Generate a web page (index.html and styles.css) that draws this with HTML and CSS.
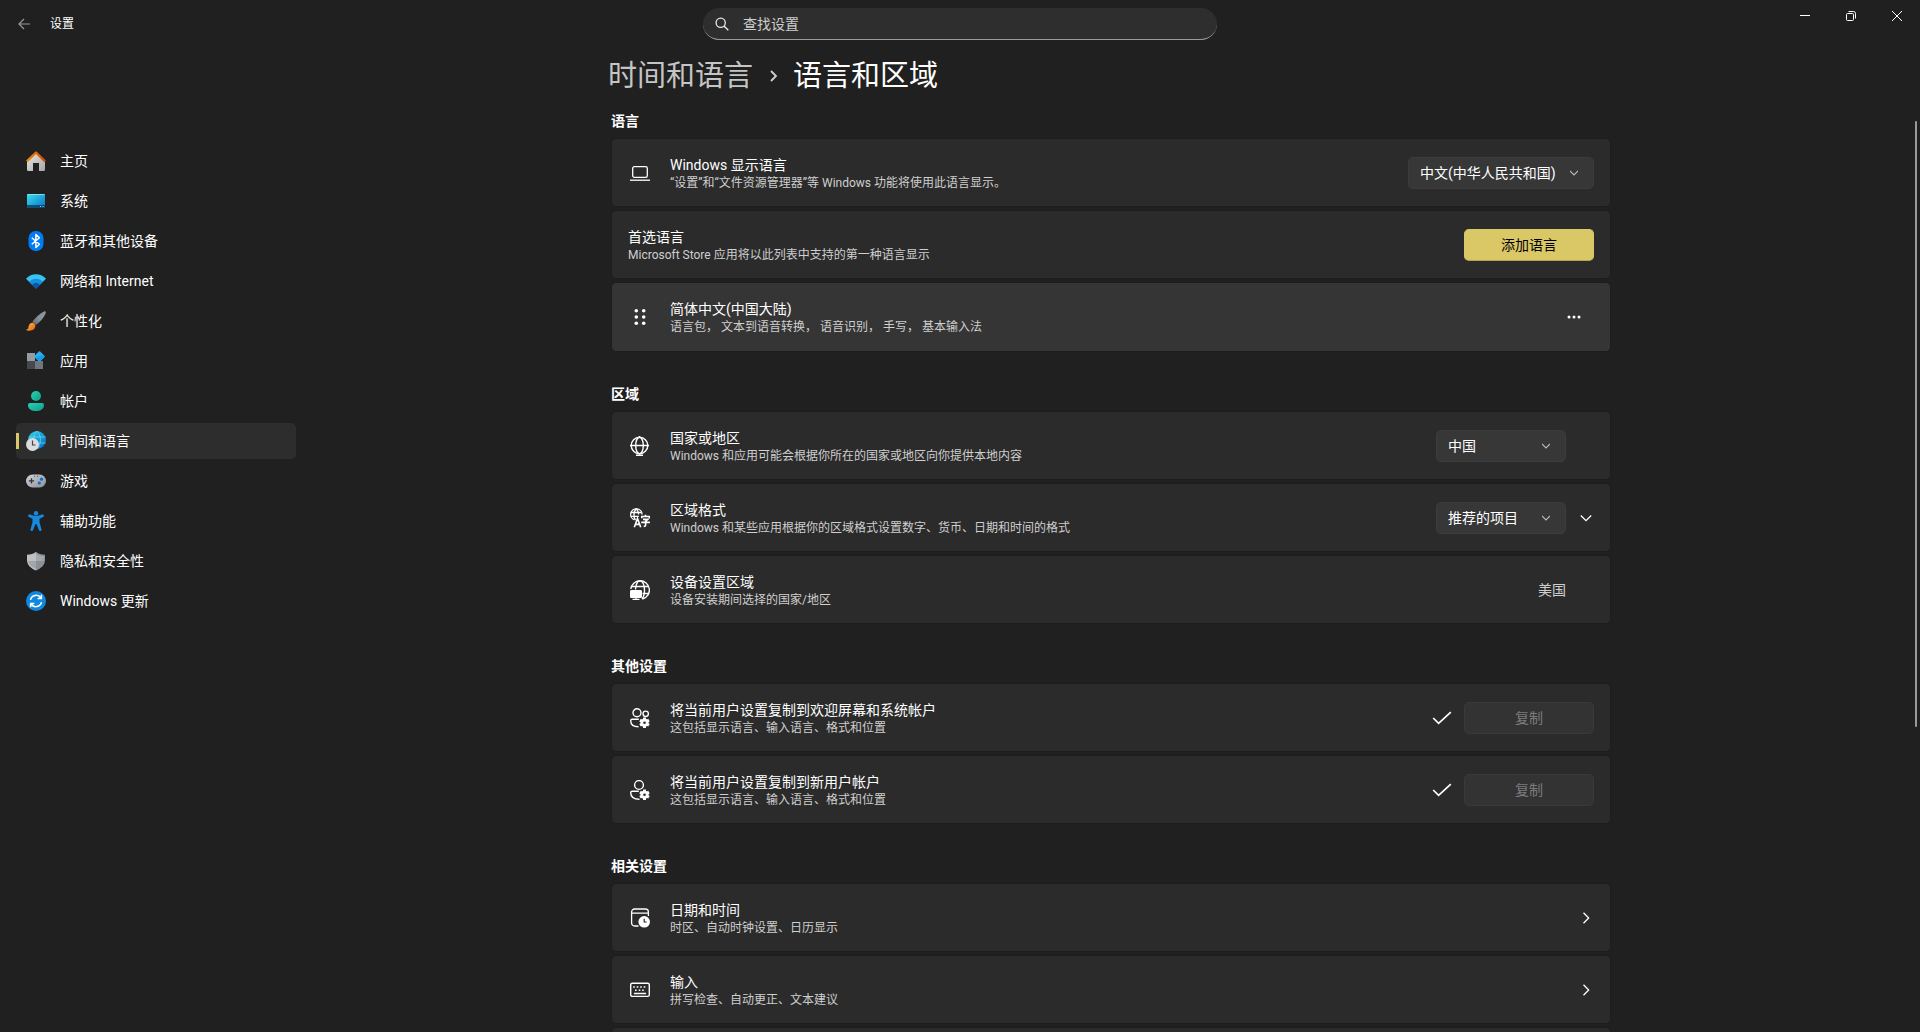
FILE: index.html
```html
<!DOCTYPE html>
<html lang="zh-CN">
<head>
<meta charset="utf-8">
<meta name="viewport" content="width=device-width, initial-scale=1">
<title>设置</title>
<link rel="stylesheet" href="styles.css">
</head>
<body>
<header class="titlebar">
  <div class="titlebar-start">
    <button class="back" type="button" aria-label="返回">
      <svg class="i12" viewBox="0 0 12 12"><path d="M6 1 1 6l5 5M1 6h11" fill="none" stroke="#9a9a9a" stroke-width="1.2"/></svg>
    </button>
    <span class="app-name">设置</span>
  </div>
  <label class="search">
    <svg class="i14" viewBox="0 0 14 14" aria-hidden="true"><circle cx="5.7" cy="5.7" r="4.6" fill="none" stroke="#e8e8e8" stroke-width="1.3"/><path d="m9 9 4.3 4.3" stroke="#e8e8e8" stroke-width="1.4"/></svg>
    <input type="text" placeholder="查找设置" aria-label="查找设置">
  </label>
  <div class="window-controls">
    <button type="button" aria-label="最小化"><svg class="i10" viewBox="0 0 10 10"><path d="M0 4.5h10" stroke="#fff"/></svg></button>
    <button type="button" aria-label="还原"><svg class="i10" viewBox="0 0 10 10"><rect x=".5" y="2.5" width="7" height="7" rx="1" fill="none" stroke="#fff"/><path d="M2.5.5H7.500A2 2 0 0 1 9.500 2.500V7.500" fill="none" stroke="#fff"/></svg></button>
    <button type="button" aria-label="关闭"><svg class="i10" viewBox="0 0 10 10"><path d="m0 0 10 10M10 0 0 10" stroke="#fff"/></svg></button>
  </div>
</header>

<div class="layout">
<nav class="nav">
  <a href="#home"><svg class="i20" viewBox="0 0 20 20"><defs><linearGradient id="hm" x1="0" y1="0" x2="1" y2="1"><stop stop-color="#e8e8e8"/><stop offset="1" stop-color="#a6a6a6"/></linearGradient><linearGradient id="rf"><stop stop-color="#f08a10"/><stop offset="1" stop-color="#d04a04"/></linearGradient></defs><path d="M1 9.500 10 1.500l9 8V18.500A1.500 1.500 0 0 1 17.500 20H13v-8H7v8H2.500A1.500 1.500 0 0 1 1 18.500z" fill="url(#hm)"/><path d="M.9 10.400 10 1.500l9.100 8.900" fill="none" stroke="url(#rf)" stroke-width="2.400" stroke-linejoin="round"/></svg>主页</a>
  <a href="#system"><svg class="i20" viewBox="0 0 20 20"><defs><linearGradient id="sy" x1="0" y1="0" x2="1" y2="1"><stop stop-color="#3ae0ea"/><stop offset="1" stop-color="#0a6fc8"/></linearGradient></defs><rect x="1" y="3" width="18" height="14" rx="1" fill="url(#sy)"/><path d="M1 14h18v2a1 1 0 0 1-1 1H2a1 1 0 0 1-1-1z" fill="#0a4263" opacity=".85"/><path d="M14 15.500h1M16.500 15.500h1" stroke="#9cd5ee"/><path d="M1.500 3.500h17" stroke="#8beef4" stroke-width=".8"/></svg>系统</a>
  <a href="#bluetooth"><svg class="i20" viewBox="0 0 20 20"><rect x="2.500" width="15" height="20" rx="7.200" fill="#007cf5"/><path d="m5.800 6.800 7.600 6.500-3.500 3.200V3.600l3.500 3.100-7.600 6.500" fill="none" stroke="#fff" stroke-width="1.500" stroke-linejoin="round"/></svg>蓝牙和其他设备</a>
  <a href="#network"><svg class="i20" viewBox="0 0 20 20"><path d="M10 17.500 0 7.700C5.500 1.900 14.500 1.900 20 7.700z" fill="#36c5f3"/><path d="M10 17.500 3.200 10.800c3.700-4 9.900-4 13.600 0z" fill="#168ee0"/><path d="m10 17.500-3.900-3.800c2.100-2.300 5.700-2.300 7.800 0z" fill="#0b55a3"/></svg>网络和 Internet</a>
  <a href="#personalization"><svg class="i20" viewBox="0 0 20 20"><defs><linearGradient id="br" x1="1" y1="0" x2="0" y2="1"><stop stop-color="#8b949d"/><stop offset=".5" stop-color="#8a929a"/><stop offset="1" stop-color="#5e656c"/></linearGradient><linearGradient id="bo" x1="0" y1="0" x2="1" y2="1"><stop stop-color="#ffc04a"/><stop offset="1" stop-color="#e85b0a"/></linearGradient></defs><path d="M18 .4c1-.7 2.200.1 1.800 1.400-1.200 4.200-5.300 8.800-9.800 12.200l-3.600-3.600C9.800 6.200 14 2.300 18 .4z" fill="url(#br)"/><path d="M0 18.700c2.200-.5 2.300-1.500 2.600-3.300.4-2.700 2.700-4.200 4.700-3.600l1.900 1.900c.7 2.400-.8 4.800-3.200 5.600-2 .7-4.700.6-6-.6z" fill="url(#bo)"/></svg>个性化</a>
  <a href="#apps"><svg class="i20" viewBox="0 0 20 20"><path d="M1 2h8v8H1z" fill="#959ba3"/><path d="M1 10h8v8H1z" fill="#45484d"/><path d="M9 10h8v8H9z" fill="#70767e"/><rect x="9.500" y="1.500" width="8" height="8" rx="1" transform="rotate(45 13.500 5.500)" fill="#28b0ef"/><path d="m9 7 4.500 3.500L18.300 6l-2-2z" fill="#128add" opacity=".55"/></svg>应用</a>
  <a href="#accounts"><svg class="i20" viewBox="0 0 20 20"><defs><linearGradient id="ac" x1="0" y1="0" x2="1" y2="1"><stop stop-color="#26d3b8"/><stop offset="1" stop-color="#129a86"/></linearGradient></defs><circle cx="10" cy="5" r="5" fill="url(#ac)"/><path d="M4 12h12a2 2 0 0 1 2 2c0 4-3.500 6-8 6s-8-2-8-6a2 2 0 0 1 2-2z" fill="url(#ac)"/></svg>帐户</a>
  <a href="#time-language" class="current" aria-current="page"><svg class="i20" viewBox="0 0 20 20"><defs><linearGradient id="gl" x1="0" y1="0" x2="1" y2="1"><stop stop-color="#2ed3e6"/><stop offset="1" stop-color="#0967c6"/></linearGradient></defs><circle cx="11" cy="9" r="9" fill="url(#gl)"/><path d="M3 6h16.500M3 12h16.500M11 0C6.500 4.500 6.500 13.500 11 18c4.500-4.500 4.500-13.500 0-18z" fill="none" stroke="#6adcf2" stroke-width=".9" opacity=".8"/><circle cx="6.500" cy="13.500" r="6.500" fill="#dcdcde"/><path d="M6.500 9.500v4.500h3" fill="none" stroke="#444" stroke-width="1.200"/></svg>时间和语言</a>
  <a href="#gaming"><svg class="i20" viewBox="0 0 20 20"><defs><linearGradient id="gm" x1="0" y1="0" x2="1" y2="1"><stop stop-color="#cfd3da"/><stop offset="1" stop-color="#8b9098"/></linearGradient></defs><rect y="3.500" width="20" height="13" rx="6.500" fill="url(#gm)"/><path d="M5.500 7.200v5.200M2.900 9.800h5.200" stroke="#333" stroke-width="1.300"/><circle cx="15.500" cy="8.200" r="1.600" fill="#0a6fca"/><circle cx="13.300" cy="12" r="1.600" fill="#0a6fca"/><path d="M8 5.300h1.200M11 5.300h1.200" stroke="#555"/></svg>游戏</a>
  <a href="#accessibility"><svg class="i20" viewBox="0 0 20 20"><circle cx="10" cy="2.200" r="2.200" fill="#148be0"/><path d="M2.200 4.200c.4-.9 1.200-1 2-.6 3.700 1.800 7.900 1.800 11.600 0 .8-.4 1.600-.3 2 .6s0 1.500-.7 1.900L13.500 7.700v3.500l2 7.300c.2.800-.2 1.300-.9 1.500-.8.200-1.400-.1-1.700-.9L10.500 13h-1l-2.400 6.100c-.3.800-.9 1.100-1.700.9-.7-.2-1.100-.7-.9-1.500l2-7.300V7.700L2.900 6.100c-.7-.4-1.100-1-.7-1.900z" fill="#148be0"/></svg>辅助功能</a>
  <a href="#privacy"><svg class="i20" viewBox="0 0 20 20"><path d="M10 .8C12.500 3 15.500 3.800 19 3.800V9c0 5-4 8.500-9 10.500z" fill="#8b9197"/><path d="M10 .8C7.500 3 4.500 3.800 1 3.800V9c0 5 4 8.500 9 10.500z" fill="#bcc1c6"/><path d="M10 2.500c2 1.600 4.500 2.500 7.700 2.600V10H10z" fill="#a4a9af"/><path d="M2.300 10H10v8c-4-1.700-7.200-4.200-7.700-8z" fill="#a1a6ab"/></svg>隐私和安全性</a>
  <a href="#update"><svg class="i20" viewBox="0 0 20 20"><circle cx="10" cy="10" r="10" fill="#0f88dd"/><path d="M4.500 8.800A5.700 5.700 0 0 1 14.900 7M15.500 11.200A5.700 5.700 0 0 1 5.100 13M15.400 3.800V7.500h-3.800M4.600 16.200v-3.700h3.800" fill="none" stroke="#fff" stroke-width="1.500"/></svg>Windows 更新</a>
</nav>

<main class="main">
<div class="content">
  <h1 class="crumbs"><a href="#time-language">时间和语言</a><svg class="i12" viewBox="0 0 12 12"><path d="m4 1 5 5-5 5" fill="none" stroke="#d0d0d0" stroke-width="1.800"/></svg><span>语言和区域</span></h1>

  <section>
    <h2>语言</h2>
    <div class="card">
      <svg class="i20 lead" viewBox="0 0 20 20"><rect x="2.700" y="3.700" width="14.600" height="10.600" rx="1.600" fill="none" stroke="#fff" stroke-width="1.300"/><path d="M0 17.200h20" stroke="#fff" stroke-width="1.300"/></svg>
      <label class="text" for="display-language"><b>Windows 显示语言</b><small>“设置”和“文件资源管理器”等 Windows 功能将使用此语言显示。</small></label>
      <div class="drop wide"><select id="display-language"><option>中文(中华人民共和国)</option></select><svg class="i8" viewBox="0 0 8 8"><path d="m0 2 4 4 4-4" fill="none" stroke="#bbb" stroke-width="1.100"/></svg></div>
    </div>
    <div class="card">
      <div class="text"><b>首选语言</b><small>Microsoft Store 应用将以此列表中支持的第一种语言显示</small></div>
      <button class="btn accent" type="button">添加语言</button>
    </div>
    <div class="card hover">
      <svg class="i20 lead" viewBox="0 0 20 20"><g fill="#fff"><circle cx="6.300" cy="3.700" r="1.800"/><circle cx="13.700" cy="3.700" r="1.800"/><circle cx="6.300" cy="10" r="1.800"/><circle cx="13.700" cy="10" r="1.800"/><circle cx="6.300" cy="16.300" r="1.800"/><circle cx="13.700" cy="16.300" r="1.800"/></g></svg>
      <div class="text"><b>简体中文(中国大陆)</b><small>语言包， 文本到语音转换， 语音识别， 手写， 基本输入法</small></div>
      <button class="more" type="button" aria-label="更多选项"><svg class="i14" viewBox="0 0 14 14"><g fill="#fff"><circle cx="2" cy="7" r="1.500"/><circle cx="7" cy="7" r="1.500"/><circle cx="12" cy="7" r="1.500"/></g></svg></button>
    </div>
  </section>

  <section>
    <h2>区域</h2>
    <div class="card">
      <svg class="i20 lead" viewBox="0 0 20 20"><g fill="none" stroke="#fff" stroke-width="1.400"><circle cx="9.500" cy="9.500" r="8.300"/><ellipse cx="9.500" cy="9.500" rx="3.800" ry="8.300"/><path d="M0 9.500h19M9.500 0v1M6 19.200h7"/></g></svg>
      <label class="text" for="country"><b>国家或地区</b><small>Windows 和应用可能会根据你所在的国家或地区向你提供本地内容</small></label>
      <div class="drop"><select id="country"><option>中国</option></select><svg class="i8" viewBox="0 0 8 8"><path d="m0 2 4 4 4-4" fill="none" stroke="#bbb" stroke-width="1.100"/></svg></div>
      <span class="trail"></span>
    </div>
    <div class="card">
      <svg class="i20 lead" viewBox="0 0 20 20"><g fill="none" stroke="#fff" stroke-width="1.300"><path d="M4.500 11.900A5.700 5.700 0 1 1 12.100 6.500"/><path d="M.6 4.500h11M.6 8.300h8.200M6.200.8C3.300 3.500 3.300 9.500 5.500 12M6.200.8c1.600 1.500 2.300 3.500 2.400 5.700"/><path d="m4.300 19.200 3.200-8.800 3.200 8.800M5.300 16.400h4.400" stroke-width="1.600"/><path d="M11.800 10.200V8.500h7.600v1.700M15.500 6.800v1.700M13 11.400h4.800l-2.200 2v4c0 .8-.5 1-1.900 1M11.200 14.400h8.700" stroke-width="1.600"/></g></svg>
      <label class="text" for="format"><b>区域格式</b><small>Windows 和某些应用根据你的区域格式设置数字、货币、日期和时间的格式</small></label>
      <div class="drop"><select id="format"><option>推荐的项目</option></select><svg class="i8" viewBox="0 0 8 8"><path d="m0 2 4 4 4-4" fill="none" stroke="#bbb" stroke-width="1.100"/></svg></div>
      <button class="trail" type="button" aria-label="展开"><svg class="i12" viewBox="0 0 12 12"><path d="m.8 3.500 5.200 5.200 5.200-5.200" fill="none" stroke="#fff" stroke-width="1.300"/></svg></button>
    </div>
    <div class="card">
      <svg class="i20 lead" viewBox="0 0 20 20"><g fill="none" stroke="#fff" stroke-width="1.400"><path d="M.8 9A9.300 9.300 0 1 1 12.500 19"/><path d="M2 6.500h16.500M12.500 13.500h6M5.500 9.500C5.800 5 7.500 1 10 .8c3 .2 4.700 5 4.500 9.700-.1 3.500-.8 6.500-2.500 8.500"/></g><rect y="10" width="12" height="8" rx="1.200" fill="#fff"/><path d="M2.500 19.400h7M6 17.500v1.500" stroke="#fff" stroke-width="1.200"/></svg>
      <div class="text"><b>设备设置区域</b><small>设备安装期间选择的国家/地区</small></div>
      <span class="value">美国</span>
      <span class="trail"></span>
    </div>
  </section>

  <section>
    <h2>其他设置</h2>
    <div class="card">
      <svg class="i20 lead" viewBox="0 0 20 20"><g fill="none" stroke="#fff" stroke-width="1.400"><circle cx="7" cy="4.800" r="4"/><circle cx="15.700" cy="5.800" r="2.700"/><path d="M8.800 11.200H2.200A1.500 1.500 0 0 0 .7 12.700c0 3.700 2.700 6 7.800 6"/></g><g stroke="#fff" stroke-width="3"><path d="M14.500 9.500v10.400M10 12.100l9 5.200M19 12.100l-9 5.200"/></g><circle cx="14.500" cy="14.700" r="4" fill="#fff"/><circle cx="14.500" cy="14.700" r="1.300" fill="#2b2b2b"/></svg>
      <div class="text"><b>将当前用户设置复制到欢迎屏幕和系统帐户</b><small>这包括显示语言、输入语言、格式和位置</small></div>
      <svg class="i20 check" viewBox="0 0 20 20"><path d="m1.200 10 5.400 5.400L18.800 4.200" fill="none" stroke="#fff" stroke-width="1.700"/></svg>
      <button class="btn" type="button" disabled>复制</button>
    </div>
    <div class="card">
      <svg class="i20 lead" viewBox="0 0 20 20"><g fill="none" stroke="#fff" stroke-width="1.400"><circle cx="9" cy="5" r="4.400"/><path d="M8.800 11.200H2.200A1.500 1.500 0 0 0 .7 12.700c0 4 3.300 6.500 8.800 6.500"/></g><g stroke="#fff" stroke-width="3"><path d="M14.500 9.500v10.400M10 12.100l9 5.200M19 12.100l-9 5.200"/></g><circle cx="14.500" cy="14.700" r="4" fill="#fff"/><circle cx="14.500" cy="14.700" r="1.300" fill="#2b2b2b"/></svg>
      <div class="text"><b>将当前用户设置复制到新用户帐户</b><small>这包括显示语言、输入语言、格式和位置</small></div>
      <svg class="i20 check" viewBox="0 0 20 20"><path d="m1.200 10 5.400 5.400L18.800 4.200" fill="none" stroke="#fff" stroke-width="1.700"/></svg>
      <button class="btn" type="button" disabled>复制</button>
    </div>
  </section>

  <section>
    <h2>相关设置</h2>
    <a class="card" href="#date-time">
      <svg class="i20 lead" viewBox="0 0 20 20"><g fill="none" stroke="#fff" stroke-width="1.300"><path d="M8.500 18H4.600A3 3 0 0 1 1.600 15V4A3 3 0 0 1 4.600 1h10.800a3 3 0 0 1 3 3v4M1.600 5.200h16.800"/></g><circle cx="14.200" cy="13.800" r="5.800" fill="#fff"/><path d="M14.200 10.800v3.200h2.500" fill="none" stroke="#2b2b2b" stroke-width="1.200"/></svg>
      <div class="text"><b>日期和时间</b><small>时区、自动时钟设置、日历显示</small></div>
      <span class="trail"><svg class="i12" viewBox="0 0 12 12"><path d="m3.500.8 5.200 5.200-5.200 5.200" fill="none" stroke="#fff" stroke-width="1.300"/></svg></span>
    </a>
    <a class="card" href="#typing">
      <svg class="i20 lead" viewBox="0 0 20 20"><rect x=".7" y="3.200" width="18.600" height="13.200" rx="1.600" fill="none" stroke="#fff" stroke-width="1.400"/><path d="M3.200 7h1.600M6.700 7h1.600M10.200 7h1.600M13.700 7h1.600M5 10.200h1.600M8.700 10.200h1.600M12.200 10.200h1.600M4 13.500h12" stroke="#fff" stroke-width="1.500"/></svg>
      <div class="text"><b>输入</b><small>拼写检查、自动更正、文本建议</small></div>
      <span class="trail"><svg class="i12" viewBox="0 0 12 12"><path d="m3.500.8 5.200 5.200-5.200 5.200" fill="none" stroke="#fff" stroke-width="1.300"/></svg></span>
    </a>
    <div class="card"></div>
  </section>
</div>
</main>
<div class="scroll-thumb"></div>
</div>
</body>
</html>
```
FILE: styles.css
```css
* { box-sizing: border-box; }

body {
  margin: 0;
  height: 100vh;
  display: flex;
  flex-direction: column;
  overflow: hidden;
  background: #202020;
  color: #fff;
  font: 14px/20px Roboto, "Noto Sans CJK SC", sans-serif;
}

a { color: inherit; text-decoration: none; }
button, input, select { font: inherit; color: inherit; margin: 0; }
button { border: 0; padding: 0; background: none; }
svg { display: block; flex: none; }

.i8 { width: 8px; height: 8px; }
.i10 { width: 10px; height: 10px; }
.i12 { width: 12px; height: 12px; }
.i14 { width: 14px; height: 14px; }
.i20 { width: 20px; height: 20px; }

/* Title bar */
.titlebar {
  flex: none;
  display: grid;
  grid-template-columns: 1fr minmax(200px, 514px) 1fr;
  align-items: center;
  height: 48px;
}
.titlebar-start { display: flex; align-items: center; gap: 8px; padding-left: 6px; }
.back { display: grid; place-items: center; width: 36px; height: 36px; }
.app-name { font-size: 12px; line-height: 16px; }

.search {
  display: flex;
  align-items: center;
  gap: 14px;
  height: 32px;
  padding: 0 12px;
  background: #2e2e2e;
  border-bottom: 1px solid #9a9a9a;
  border-radius: 16px;
}
.search input {
  flex: 1;
  min-width: 0;
  padding: 0;
  border: 0;
  outline: 0;
  background: none;
}
.search input::placeholder { color: #cfcfcf; opacity: 1; }

.window-controls { display: flex; align-self: start; justify-content: flex-end; }
.window-controls button { display: grid; place-items: center; width: 46px; height: 32px; }

/* Page body */
.layout {
  position: relative;
  flex: 1;
  min-height: 0;
  display: grid;
  grid-template-columns: 302px 1fr;
}

.nav {
  display: flex;
  flex-direction: column;
  gap: 4px;
  padding: 95px 6px 0 16px;
}
.nav a {
  display: flex;
  align-items: center;
  gap: 14px;
  height: 36px;
  padding-left: 10px;
  border-radius: 5px;
}
.nav .current {
  background:
    linear-gradient(#dac866, #dac866) left center / 3px 16px no-repeat,
    #2d2d2d;
}

.main { min-width: 0; overflow-y: auto; scrollbar-width: none; padding: 10px 20px 0; }
.content { max-width: 1000px; margin: 0 auto; }

.crumbs {
  display: flex;
  align-items: center;
  gap: 14px;
  margin: 0 0 17px -3px;
  font-size: 29px;
  line-height: 36px;
  font-weight: 400;
}
.crumbs a { color: #c5c5c5; }

section { display: flex; flex-direction: column; gap: 3px; margin-bottom: 32px; }
h2 { margin: 0 0 4px; font-size: 14px; line-height: 20px; font-weight: 700; }

.card {
  display: flex;
  align-items: center;
  min-height: 69px;
  padding: 0 16px;
  background: #2b2b2b;
  border: 1px solid #1d1d1d;
  border-radius: 5px;
}
.card.hover { min-height: 70px; background: #353535; }
.lead { margin: 0 20px 0 2px; }
.text { flex: 1; min-width: 0; display: flex; flex-direction: column; }
.text b { font-weight: 400; }
.text small { font-size: 12px; line-height: 16px; color: #cfcfcf; }

.drop { display: grid; align-items: center; width: 130px; }
.drop.wide { width: 186px; }
.drop select, .drop svg { grid-area: 1 / 1; }
.drop svg { justify-self: end; margin-right: 16px; pointer-events: none; }
.drop select {
  appearance: none;
  width: 100%;
  height: 32px;
  padding: 0 28px 0 11px;
  background: #373737;
  border: 1px solid #3c3c3c;
  border-radius: 5px;
}

.btn {
  width: 130px;
  height: 32px;
  background: #333;
  border: 1px solid #3a3a3a;
  border-radius: 5px;
}
.btn:disabled { color: #7c7c7c; }
.btn.accent { background: #dac866; border-color: #dac866 #dac866 #b3a455; color: #000; }

.more { display: grid; place-items: center; width: 40px; height: 32px; }
.trail { display: grid; place-items: center; width: 28px; height: 32px; margin: 0 -6px 0 6px; }
.value { color: #cfcfcf; }
.check { margin-right: 12px; }

.scroll-thumb {
  position: absolute;
  top: 73px;
  right: 3px;
  bottom: 31%;
  width: 2px;
  border-radius: 1px;
  background: #9a9a9a;
}
```
